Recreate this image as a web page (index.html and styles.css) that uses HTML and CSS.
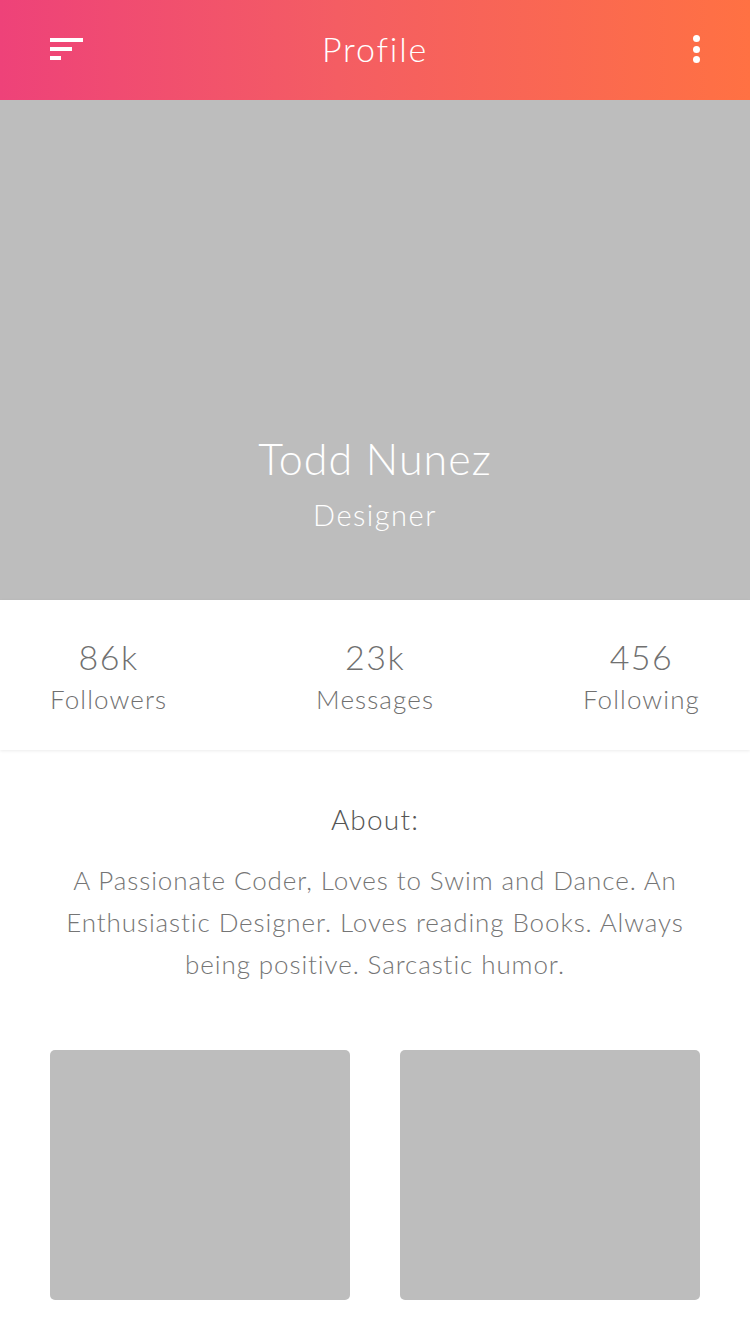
FILE: index.html
```html
<!DOCTYPE html>
<html>
<head>
<meta charset="utf-8">
<link rel="stylesheet" href="styles.css">
</head>
<body>
<header class="topbar">
  <div class="menu-icon" aria-label="menu">
    <span class="bar bar-1"></span>
    <span class="bar bar-2"></span>
    <span class="bar bar-3"></span>
  </div>
  <h1 class="title">Profile</h1>
  <div class="more-icon" aria-label="more">
    <span class="dot"></span>
    <span class="dot"></span>
    <span class="dot"></span>
  </div>
</header>

<section class="hero">
  <div class="name">Todd Nunez</div>
  <div class="role">Designer</div>
</section>

<section class="stats">
  <div class="stat">
    <div class="stat-num">86k</div>
    <div class="stat-label">Followers</div>
  </div>
  <div class="stat">
    <div class="stat-num">23k</div>
    <div class="stat-label">Messages</div>
  </div>
  <div class="stat">
    <div class="stat-num">456</div>
    <div class="stat-label">Following</div>
  </div>
</section>

<section class="about">
  <h2 class="about-title">About:</h2>
  <p class="about-text">A Passionate Coder, Loves to Swim and Dance. An Enthusiastic Designer. Loves reading Books. Always being positive. Sarcastic humor.</p>
</section>

<section class="gallery">
  <div class="tile"></div>
  <div class="tile"></div>
</section>
</body>
</html>
```

FILE: styles.css
```css
* { box-sizing: border-box; }
html, body {
  margin: 0;
  padding: 0;
  background: #ffffff;
  font-family: "Lato", "Open Sans", sans-serif;
}

.topbar {
  height: 100px;
  display: flex;
  align-items: center;
  justify-content: space-between;
  padding: 0 50px;
  background: linear-gradient(90deg, #ee4279 0%, #f45d63 45%, #ff7143 100%);
}
.menu-icon {
  width: 33px;
  display: flex;
  flex-direction: column;
  gap: 5px;
  margin-bottom: 2px;
}
.bar {
  display: block;
  height: 4px;
  background: #fff;
}
.bar-1 { width: 33px; }
.bar-2 { width: 22px; }
.bar-3 { width: 11px; }
.title {
  margin: 0 0 4px;
  color: #fff;
  font-weight: 300;
  font-size: 34px;
  letter-spacing: 1.8px;
}
.more-icon {
  width: 33px;
  display: flex;
  flex-direction: column;
  align-items: flex-end;
  gap: 3.7px;
  margin-bottom: 2px;
}
.dot {
  display: block;
  width: 7px;
  height: 7px;
  border-radius: 50%;
  background: #fff;
}

.hero {
  height: 500px;
  background: #bdbdbd;
  display: flex;
  flex-direction: column;
  align-items: center;
  justify-content: flex-end;
  padding-bottom: 68px;
  color: #fff;
}
.name {
  font-size: 43px;
  font-weight: 300;
  line-height: 50px;
  letter-spacing: 1px;
}
.role {
  font-size: 29px;
  font-weight: 300;
  line-height: 34px;
  letter-spacing: 1.5px;
  margin-top: 14px;
}

.stats {
  height: 150px;
  display: flex;
  justify-content: space-between;
  align-items: flex-start;
  padding: 35px 50px 0;
  background: #fff;
  box-shadow: 0 1px 3px rgba(0,0,0,0.08);
  position: relative;
  color: #707070;
}
.stat {
  display: flex;
  flex-direction: column;
  align-items: center;
}
.stat-num {
  font-size: 34px;
  font-weight: 300;
  line-height: 44px;
  letter-spacing: 1.5px;
}
.stat-label {
  font-size: 26px;
  font-weight: 300;
  line-height: 40px;
  letter-spacing: 1.1px;
}

.about {
  padding: 49px 50px 0;
  text-align: center;
}
.about-title {
  margin: 0;
  font-size: 28px;
  font-weight: 300;
  line-height: 40px;
  letter-spacing: 1.2px;
  color: #555;
}
.about-text {
  margin: 20px 0 0;
  font-size: 26px;
  font-weight: 300;
  line-height: 42px;
  letter-spacing: 0.9px;
  color: #757575;
}

.gallery {
  display: flex;
  justify-content: space-between;
  padding: 65px 50px 0;
}
.tile {
  width: 300px;
  height: 250px;
  border-radius: 5px;
  background: #bdbdbd;
}
```
